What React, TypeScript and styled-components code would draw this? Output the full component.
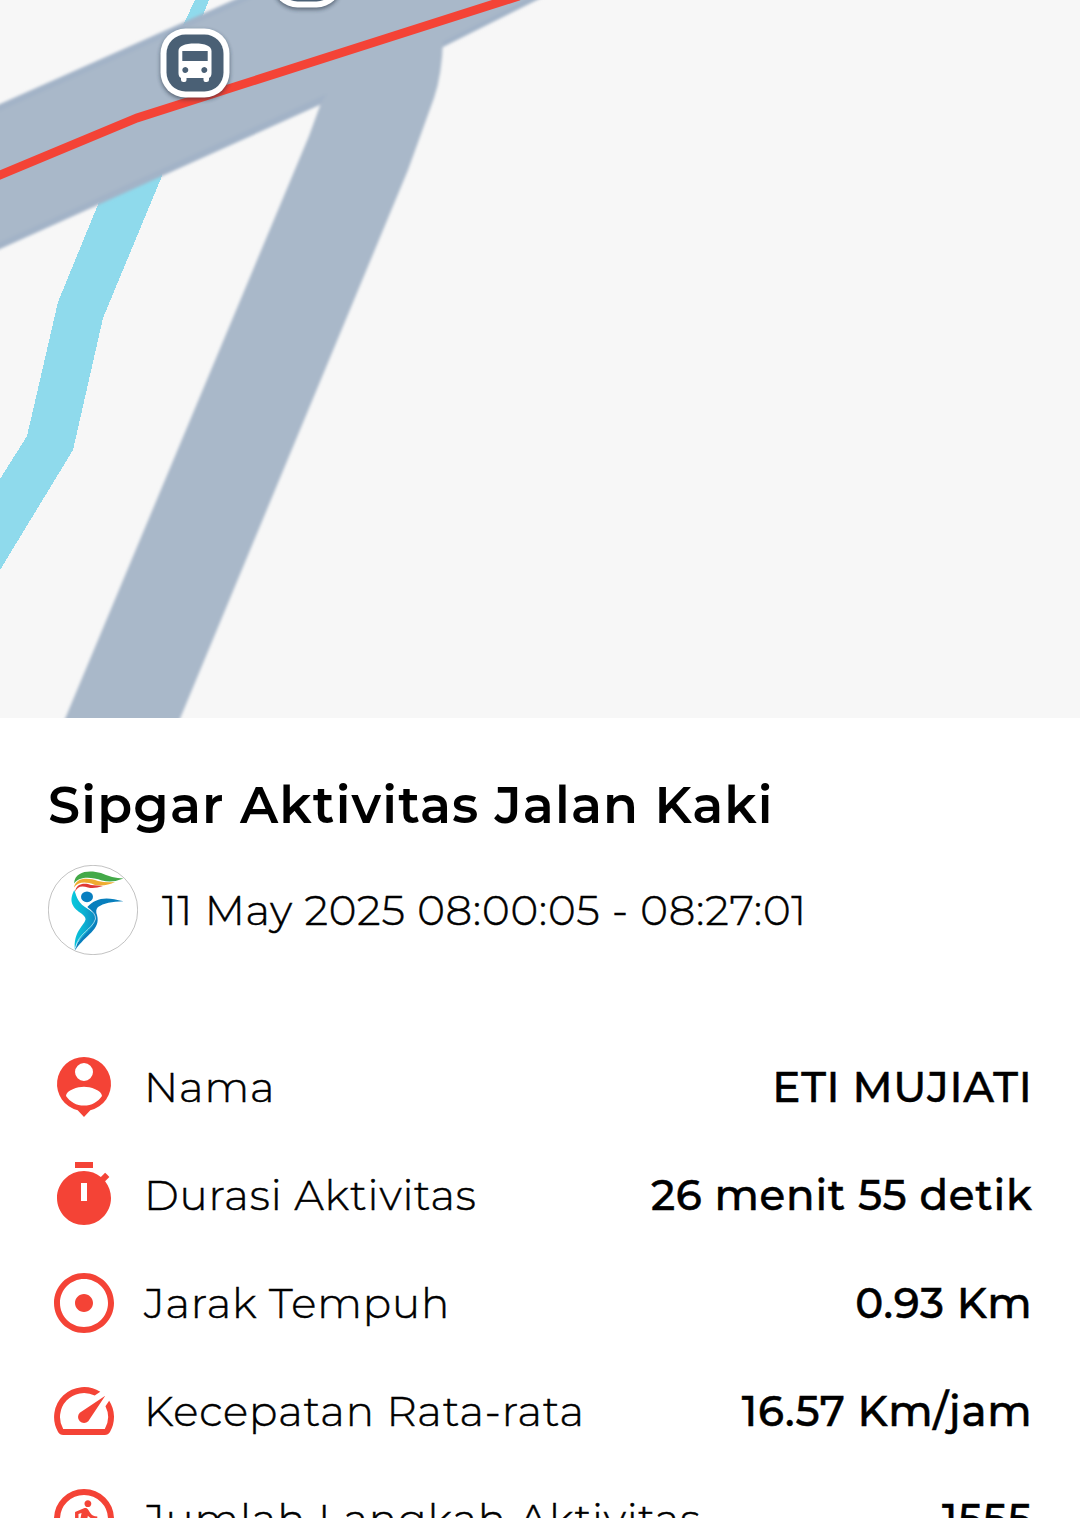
import React from "react";
import styled, { createGlobalStyle } from "styled-components";
import { MdAdjust, MdSpeed } from "react-icons/md";

const GlobalStyle = createGlobalStyle`
  body {
    margin: 0;
    background-color: #ffffff;
  }
`;

const Screen = styled.main`
  width: 1080px;
  height: 1518px;
  overflow: hidden;
  display: flex;
  flex-direction: column;
  background-color: #ffffff;
  color: #000000;
  font-family: Montserrat, Inter, sans-serif;
`;

const MapView = styled.svg`
  display: block;
  width: 1080px;
  height: 718px;
  flex-shrink: 0;
  background-color: #f7f7f7;
`;

const Summary = styled.section`
  flex-shrink: 0;
  padding: 55px 48px 0;
`;

const Title = styled.h1`
  margin: 0;
  height: 64px;
  line-height: 64px;
  font-size: 51px;
  font-weight: 600;
  white-space: nowrap;
  letter-spacing: 1.18px;
`;

const DateRow = styled.div`
  display: flex;
  align-items: center;
  gap: 24px;
  height: 90px;
  margin: 28px 0 78px;
`;

const Logo = styled.svg`
  width: 90px;
  height: 90px;
  flex-shrink: 0;
`;

const BaseText = styled.span`
  font-size: 42px;
  font-weight: 300;
  line-height: 60px;
  white-space: nowrap;
  letter-spacing: 0.75px;
  -webkit-text-stroke: 0.5px #000000;
`;

const Label = styled(BaseText)`
  letter-spacing: 0.87px;
`;

const Value = styled(BaseText)`
  margin-left: auto;
  margin-right: -0.5px;
  font-weight: 500;
`;

const StatRow = styled.div`
  display: flex;
  align-items: center;
  height: 108px;
`;

const IconSlot = styled.span`
  display: flex;
  width: 72px;
  height: 72px;
  margin-right: 24px;
  color: #f44336;

  svg {
    width: 72px;
    height: 72px;
  }
`;

const PersonIcon = () => (
  <svg viewBox="0 0 24 24" fill="currentColor">
    <path
      fillRule="evenodd"
      d="M12 2a9 9 0 0 0-2.1 17.75L12 22l2.1-2.25A9 9 0 0 0 12 2zm0 2a3 3 0 1 1 0 6 3 3 0 0 1 0-6zm0 14.2c-2.5 0-4.71-1.28-6-3.22.03-1.99 4-3.08 6-3.08 1.99 0 5.97 1.09 6 3.08-1.29 1.94-3.5 3.22-6 3.22z"
    />
  </svg>
);

const TimerIcon = () => (
  <svg viewBox="0 0 24 24" fill="currentColor">
    <path d="M9 1h6v2H9zM19.03 7.39l1.42-1.42c-.45-.51-.9-.97-1.41-1.41L17.62 5.98C16.07 4.74 14.12 4 12 4c-4.97 0-9 4.03-9 9s4.02 9 9 9 9-4.03 9-9c0-2.12-.74-4.07-1.97-5.61zM13 14h-2V8h2v6z" />
  </svg>
);

const StepsIcon = () => (
  <svg viewBox="0 0 24 24" fill="currentColor">
    <circle cx="12" cy="12" r="9" fill="none" stroke="currentColor" strokeWidth="2" />
    <path
      transform="translate(5.6 4.9) scale(.57)"
      d="M13.5 5.5c1.1 0 2-.9 2-2s-.9-2-2-2-2 .9-2 2 .9 2 2 2zM9.8 8.9L7 23h2.1l1.8-8 2.1 2v6h2v-7.5l-2.1-2 .6-3C14.8 12 16.8 13 19 13v-2c-1.9 0-3.5-1-4.3-2.4l-1-1.6c-.4-.6-1-1-1.7-1-.3 0-.5.1-.8.1L6 8.3V13h2V9.6l1.8-.7"
    />
  </svg>
);

const BusStop = ({ x, y }: { x: number; y: number }) => (
  <g transform={`translate(${x} ${y})`}>
    <rect x="-34.5" y="-32.5" width="69" height="69" rx="25" fill="#1f2a3a" opacity=".6" filter="url(#soft)" />
    <rect x="-34.5" y="-34.5" width="69" height="69" rx="25" fill="#ffffff" />
    <rect x="-28.5" y="-28.5" width="57" height="57" rx="19" fill="#4a6075" />
    <path
      fill="#ffffff"
      fillRule="evenodd"
      d="M-16.5-12c0-5 6-7.500 16.500-7.500s16.500 2.500 16.500 7.500v22q0 4-2.500 5v2q0 2-2.500 2h-1q-2 0-2-2v-2H-8.500v2q0 2-2 2h-1q-2.500 0-2.500-2v-2q-2.500-1-2.500-5zm3.800 0v10h25.400v-10zm3 16a3 3 0 1 0 .01 0zm19 0a3 3 0 1 0 .01 0z"
    />
  </g>
);

const ActivityMap = () => (
  <MapView viewBox="0 0 1080 718">
    <defs>
      <filter id="soft" x="-30%" y="-30%" width="160%" height="160%">
        <feGaussianBlur stdDeviation="2" />
      </filter>
      <filter id="edge">
        <feGaussianBlur stdDeviation="1.5" />
      </filter>
    </defs>
    <path
      d="M195 0H209L185 60 162 176 103 318 73 450 0 570V479L27 436 58 302 99 202z"
      fill="#8fdaec"
      shapeRendering="crispEdges"
    />
    <g filter="url(#edge)">
      <path d="M-20 113L256-10H557L443 47 324 103-20 258z" fill="#a3b3c7" />
      <path d="M-20 120L271-10H545L443 41 320 97-20 251z" fill="#a9b8c9" />
      <path d="M443 40Q442 75 434 98L408 170 172 738H57L309 136 321 103 350 60z" fill="#a9b8c9" />
    </g>
    <path d="M-5 177L137 118 519-4" fill="none" stroke="#f44336" strokeWidth="8.800" />
    <BusStop x={195} y={63} />
    <BusStop x={307} y={-27} />
  </MapView>
);

const ActivityLogo = () => (
  <Logo viewBox="0 0 90 90">
    <defs>
      <linearGradient id="ribbon" x1="0" x2="1">
        <stop offset="0" stopColor="#08c9dc" />
        <stop offset=".5" stopColor="#0bb0d2" />
        <stop offset="1" stopColor="#0e86c0" />
      </linearGradient>
    </defs>
    <circle cx="45" cy="45" r="44.700" fill="#ffffff" stroke="#999999" strokeWidth=".6" />
    <path d="M26 18.500C27 5.500 42 5 53 8Q64 13 75.500 13.500Q65 18 54 15.500C43 12 32 11 26 18.500z" fill="#43a948" />
    <path d="M26 22.500C28 12 40 12.500 50 16Q58 18 67 17Q58 21.500 47 20C37 16 30 17 26 22.500z" fill="#efac30" />
    <path d="M27 27C28 18 37 17.500 43 20L55 21Q46 24 40 22.500C33 20 29 22 27 27z" fill="#df3935" />
    <ellipse cx="39" cy="31.800" rx="6" ry="5.400" fill="#087fc0" />
    <path d="M26.300 25C20 37 25 43 34 49Q39 53 37 56C35 61 25 68 27 85C28 73 41 70 47 58C51 51 46 48 40 44C30 38 29 33 26.300 25z" fill="url(#ribbon)" />
    <path d="M39.300 42C48 33 57 31 75.500 36.300Q58 36.500 50 42Q47 45 49 50C53 65 38 69 27 85.500C28 74 40 69 46 59Q50 50 39.300 42z" fill="#087fbd" />
    <path d="M39 42.500Q48 48 47.500 54C44 65 30 68 27.500 83" fill="none" stroke="#dff5fa" strokeWidth=".7" />
  </Logo>
);

const stats = [
  { icon: <PersonIcon />, label: "Nama", value: "ETI MUJIATI" },
  { icon: <TimerIcon />, label: "Durasi Aktivitas", value: "26 menit 55 detik" },
  { icon: <MdAdjust />, label: "Jarak Tempuh", value: "0.93 Km" },
  { icon: <MdSpeed />, label: "Kecepatan Rata-rata", value: "16.57 Km/jam" },
  { icon: <StepsIcon />, label: "Jumlah Langkah Aktivitas", value: "1555" }
];

const App: React.FC = () => {
  return (
    <>
      <GlobalStyle />
      <Screen>
        <ActivityMap />
        <Summary>
          <Title>Sipgar Aktivitas Jalan Kaki</Title>
          <DateRow>
            <ActivityLogo />
            <BaseText>11 May 2025 08:00:05 - 08:27:01</BaseText>
          </DateRow>
          {stats.map(stat => (
            <StatRow key={stat.label}>
              <IconSlot>{stat.icon}</IconSlot>
              <Label>{stat.label}</Label>
              <Value>{stat.value}</Value>
            </StatRow>
          ))}
        </Summary>
      </Screen>
    </>
  );
};

export default App;
